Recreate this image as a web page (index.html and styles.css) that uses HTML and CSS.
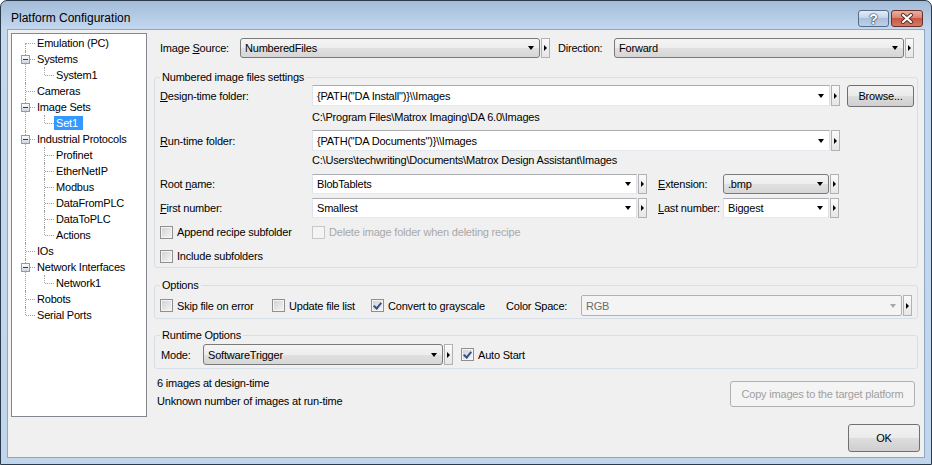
FILE: index.html
```html
<!DOCTYPE html>
<html lang="en">
<head>
  <meta charset="UTF-8" />
  <title>Platform Configuration</title>
  <link rel="stylesheet" href="styles.css">
</head>
<body>
  <div class="window">
    <div class="titlebar">
      <span class="title">Platform Configuration</span>
      <span class="capbtn help">?</span>
      <span class="capbtn close">
        <svg width="14" height="11" viewBox="0 0 14 11">
          <path d="M3 2 L11 9 M11 2 L3 9" stroke="#5a2a25" stroke-width="4" stroke-linecap="round"/>
          <path d="M3 2 L11 9 M11 2 L3 9" stroke="#fff" stroke-width="2.2" stroke-linecap="round"/>
        </svg>
      </span>
    </div>

    <div class="client">
      <div class="body">
        <ul class="tree">
          <li><div class="row"><span class="elb"></span><span class="lbl">Emulation (PC)</span></div></li>
          <li><div class="row"><span class="elb"><i class="exp"></i></span><span class="lbl">Systems</span></div>
            <ul>
              <li><div class="row"><span class="elb"></span><span class="lbl">System1</span></div></li>
            </ul>
          </li>
          <li><div class="row"><span class="elb"></span><span class="lbl">Cameras</span></div></li>
          <li><div class="row"><span class="elb"><i class="exp"></i></span><span class="lbl">Image Sets</span></div>
            <ul>
              <li><div class="row"><span class="elb"></span><span class="lbl sel">Set1</span></div></li>
            </ul>
          </li>
          <li><div class="row"><span class="elb"><i class="exp"></i></span><span class="lbl">Industrial Protocols</span></div>
            <ul>
              <li><div class="row"><span class="elb"></span><span class="lbl">Profinet</span></div></li>
              <li><div class="row"><span class="elb"></span><span class="lbl">EtherNetIP</span></div></li>
              <li><div class="row"><span class="elb"></span><span class="lbl">Modbus</span></div></li>
              <li><div class="row"><span class="elb"></span><span class="lbl">DataFromPLC</span></div></li>
              <li><div class="row"><span class="elb"></span><span class="lbl">DataToPLC</span></div></li>
              <li><div class="row"><span class="elb"></span><span class="lbl">Actions</span></div></li>
            </ul>
          </li>
          <li><div class="row"><span class="elb"></span><span class="lbl">IOs</span></div></li>
          <li><div class="row"><span class="elb"><i class="exp"></i></span><span class="lbl">Network Interfaces</span></div>
            <ul>
              <li><div class="row"><span class="elb"></span><span class="lbl">Network1</span></div></li>
            </ul>
          </li>
          <li><div class="row"><span class="elb"></span><span class="lbl">Robots</span></div></li>
          <li><div class="row"><span class="elb"></span><span class="lbl">Serial Ports</span></div></li>
        </ul>

        <div class="main">
          <div class="toprow">
            <span class="lab w-src">Image <u>S</u>ource:</span>
            <div class="combo list w-src-box"><span class="val">NumberedFiles</span><i class="dd"></i></div>
            <span class="spin"></span>
            <span class="lab w-dir">Direction:</span>
            <div class="combo list w-dir-box"><span class="val">Forward</span><i class="dd"></i></div>
            <span class="spin"></span>
          </div>

          <div class="group g-files">
            <div class="legend">Numbered image files settings</div>
            <div class="frow r-design">
              <span class="lab w-field"><u>D</u>esign-time folder:</span>
              <div class="combo edit w-path"><span class="val">{PATH("DA Install")}\\Images</span><i class="dd"></i></div>
              <span class="spin"></span>
              <button class="btn browse">Browse...</button>
            </div>
            <div class="path p-design">C:\Program Files\Matrox Imaging\DA 6.0\Images</div>
            <div class="frow r-run">
              <span class="lab w-field"><u>R</u>un-time folder:</span>
              <div class="combo edit w-path"><span class="val">{PATH("DA Documents")}\\Images</span><i class="dd"></i></div>
              <span class="spin"></span>
            </div>
            <div class="path p-run">C:\Users\techwriting\Documents\Matrox Design Assistant\Images</div>
            <div class="frow r-root">
              <span class="lab w-field">Root <u>n</u>ame:</span>
              <div class="combo edit w-name"><span class="val">BlobTablets</span><i class="dd"></i></div>
              <span class="spin"></span>
              <span class="lab w-ext"><u>E</u>xtension:</span>
              <div class="combo list w-extbox"><span class="val">.bmp</span><i class="dd"></i></div>
              <span class="spin"></span>
            </div>
            <div class="frow r-first">
              <span class="lab w-field"><u>F</u>irst number:</span>
              <div class="combo edit w-name"><span class="val">Smallest</span><i class="dd"></i></div>
              <span class="spin"></span>
              <span class="lab w-ext"><u>L</u>ast number:</span>
              <div class="combo edit w-extbox"><span class="val">Biggest</span><i class="dd"></i></div>
              <span class="spin"></span>
            </div>
            <div class="crow c-first">
              <label class="chk w-field"><i class="box"></i>Append recipe subfolder</label>
              <label class="chk off"><i class="box"></i>Delete image folder when deleting recipe</label>
            </div>
            <div class="crow c-second">
              <label class="chk"><i class="box"></i>Include subfolders</label>
            </div>
          </div>

          <div class="group g-options">
            <div class="legend">Options</div>
            <div class="frow r-options">
              <label class="chk w-skip"><i class="box"></i>Skip file on error</label>
              <label class="chk w-upd"><i class="box"></i>Update file list</label>
              <label class="chk w-gray"><i class="box on"></i>Convert to grayscale</label>
              <span class="lab w-cs">Color Space:</span>
              <div class="combo dis w-csbox"><span class="val">RGB</span><i class="dd"></i></div>
              <span class="spin"></span>
            </div>
          </div>

          <div class="group g-runtime">
            <div class="legend">Runtime Options</div>
            <div class="frow r-mode">
              <span class="lab w-mode">Mode:</span>
              <div class="combo list w-modebox"><span class="val">SoftwareTrigger</span><i class="dd"></i></div>
              <span class="spin"></span>
              <label class="chk auto"><i class="box on"></i>Auto Start</label>
            </div>
          </div>

          <div class="info">
            <div class="counts">
              <div>6 images at design-time</div>
              <div>Unknown number of images at run-time</div>
            </div>
            <button class="btn copy" disabled>Copy images to the target platform</button>
          </div>
        </div>
      </div>

      <div class="footer">
        <button class="btn ok">OK</button>
      </div>
    </div>
  </div>
</body>
</html>
```

FILE: styles.css
```css
body {
  margin: 0;
  background: #ffffff;
  font-family: "Liberation Sans", Arial, sans-serif;
  font-size: 11px;
  letter-spacing: -0.2px;
  color: #000;
}
.window {
  width: 932px;
  height: 465px;
  box-sizing: border-box;
  border: 1px solid #2b3b4c;
  border-radius: 7px 7px 0 0;
  background: linear-gradient(#a3bcd8 0, #c3d8ef 28px, #c1d6ed 100%);
  padding: 0 6px 6px;
  display: flex;
  flex-direction: column;
}

/* title bar */
.titlebar {
  height: 28px;
  display: flex;
  align-items: center;
  padding: 0 2px 0 4px;
}
.title {
  flex: 1;
  margin-top: 6px;
  font-size: 12px;
  letter-spacing: 0;
}
.capbtn {
  height: 15px;
  margin-top: 7px;
  border-radius: 3px;
  display: flex;
  align-items: center;
  justify-content: center;
}
.help {
  width: 29px;
  border: 1px solid #566d8a;
  background: linear-gradient(#e4ecf6 0, #c4d5ea 45%, #a9c0dc 50%, #bcd0e8 100%);
  color: #fff;
  font-weight: bold;
  font-size: 14px;
  text-shadow: 0 0 1px #2a3a50, 0 0 1px #2a3a50, 0 0 2px #2a3a50;
  margin-right: 2px;
}
.close {
  width: 30px;
  border: 1px solid #6b2f29;
  background: linear-gradient(#eab0a2 0, #d98472 45%, #c75843 50%, #d37a62 100%);
}

/* client area */
.client {
  flex: 1;
  background: #f0f0f0;
  border: 1px solid #8fa7c4;
  padding: 3px;
  display: flex;
  flex-direction: column;
}
.body {
  display: flex;
  height: 384px;
}

/* tree */
.tree {
  width: 136px;
  height: 384px;
  box-sizing: border-box;
  border: 1px solid #828790;
  background: #fff;
  margin: 0;
  padding: 1px 0 0;
  list-style: none;
}
.tree ul {
  list-style: none;
  margin: 0;
  padding-left: 19px;
}
.tree li {
  position: relative;
}
.tree li::before {
  content: "";
  position: absolute;
  left: 13px;
  top: 0;
  bottom: 0;
  border-left: 1px dotted #a0a0a0;
}
.tree > li:first-child::before {
  top: 8px;
}
.tree li:last-child::before {
  bottom: auto;
  height: 8px;
}
.row {
  display: flex;
  align-items: center;
  height: 16px;
}
.elb {
  position: relative;
  width: 23px;
  height: 16px;
  flex: none;
}
.elb::before {
  content: "";
  position: absolute;
  left: 14px;
  top: 8px;
  width: 9px;
  border-top: 1px dotted #a0a0a0;
}
.exp {
  position: absolute;
  left: 9px;
  top: 4px;
  width: 9px;
  height: 9px;
  box-sizing: border-box;
  border: 1px solid #8a9db3;
  background: linear-gradient(#ffffff, #cdd8e3);
  z-index: 1;
}
.exp::after {
  content: "";
  position: absolute;
  left: 1px;
  top: 3px;
  width: 5px;
  height: 1px;
  background: #1f3e66;
}
.lbl {
  padding: 0 2px;
  line-height: 14px;
  white-space: nowrap;
}
.lbl.sel {
  background: #3399ff;
  color: #fff;
  padding-right: 5px;
}

/* right side */
.main {
  margin-left: 7px;
  width: 764px;
  display: flex;
  flex-direction: column;
}
.toprow {
  display: flex;
  align-items: center;
  height: 20px;
  margin-top: 5px;
  padding-left: 6px;
}
.lab {
  flex: none;
  white-space: nowrap;
}
.w-src { width: 80px; }
.w-src-box { width: 300px; }
.w-dir { width: 56px; margin-left: 8px; }
.w-dir-box { width: 290px; }

.combo {
  flex: none;
  box-sizing: border-box;
  height: 100%;
  display: flex;
  align-items: center;
  padding: 0 5px 0 4px;
  white-space: nowrap;
}
.combo .val {
  flex: 1;
}
.dd {
  width: 0;
  height: 0;
  border-top: 4px solid #000;
  border-left: 3.5px solid transparent;
  border-right: 3.5px solid transparent;
}
.combo.list {
  border: 1px solid #7a7a7a;
  border-radius: 3px;
  background: linear-gradient(#f5f5f5 0, #ededed 50%, #e0e0e0 51%, #d6d6d6 100%);
}
.combo.edit {
  border: 1px solid;
  border-color: #abadb3 #dbdfe6 #e3e9ef #e2e3ea;
  background: #fff;
}
.combo.dis {
  border: 1px solid #adb2b5;
  border-radius: 2px;
  background: #f4f4f4;
  color: #6d6d6d;
}
.combo.dis .dd {
  border-top-color: #a8a8a8;
}
.spin {
  flex: none;
  width: 9px;
  height: 100%;
  box-sizing: border-box;
  margin-left: 1px;
  border: 1px solid #b2b2b2;
  background: linear-gradient(#fafafa, #e6e6e6);
  display: flex;
  align-items: center;
  justify-content: center;
}
.spin::after {
  content: "";
  border-left: 3px solid #000;
  border-top: 3px solid transparent;
  border-bottom: 3px solid transparent;
}

/* group boxes */
.group {
  border: 1px solid #d5dfe5;
  border-radius: 3px;
  padding: 0 5px;
}
.legend {
  width: max-content;
  margin: -7px 0 0;
  padding: 0 2px;
  line-height: 13px;
  background: #f0f0f0;
}
.frow {
  display: flex;
  align-items: center;
}
.crow {
  display: flex;
  align-items: center;
  height: 14px;
}
.path {
  padding-left: 152px;
  display: flex;
  align-items: center;
}
.w-field { width: 152px; }
.w-path { width: 518px; }
.w-name { width: 325px; }
.w-ext { width: 65px; margin-left: 11px; }
.w-extbox { width: 106px; }

.g-files { margin-top: 19px; padding-bottom: 4px; }
.r-design { height: 21px; margin-top: 1px; }
.p-design { height: 22px; }
.r-run { height: 21px; margin-top: 2px; }
.p-run { height: 18px; }
.r-root { height: 20px; margin-top: 5px; }
.r-first { height: 20px; margin-top: 4px; }
.c-first { margin-top: 7px; }
.c-second { margin-top: 10px; }

.g-options { margin-top: 17px; padding-bottom: 2px; }
.r-options { height: 21px; margin-top: 3px; }
.w-skip { width: 112px; }
.w-upd { width: 99px; }
.w-gray { width: 135px; }
.w-cs { width: 75px; }
.w-csbox { width: 321px; }

.g-runtime { margin-top: 16px; padding-bottom: 3px; }
.r-mode { height: 21px; margin-top: 2px; }
.w-mode { width: 42px; padding-left: 1px; }
.w-modebox { width: 240px; }
.auto { margin-left: 8px; }

/* checkboxes */
.chk {
  display: flex;
  align-items: center;
  white-space: nowrap;
  flex: none;
}
.box {
  width: 13px;
  height: 13px;
  box-sizing: border-box;
  margin-right: 4px;
  border: 1px solid #8e8f8f;
  box-shadow: inset 0 0 0 1px #f4f4f4;
  background: linear-gradient(135deg, #cfcfcf, #f7f7f7);
  flex: none;
  display: flex;
  align-items: center;
  justify-content: center;
}
.box.on::after {
  content: "";
  width: 3px;
  height: 6px;
  margin-top: -2px;
  border: solid #344d8c;
  border-width: 0 2px 2px 0;
  transform: rotate(40deg);
}
.chk.off {
  color: #a8a8a8;
}
.chk.off .box {
  border-color: #c8c8c8;
  background: #f4f4f4;
  box-shadow: none;
}

/* buttons */
.btn {
  font: inherit;
  letter-spacing: inherit;
  color: #000;
  border: 1px solid #707070;
  border-radius: 3px;
  background: linear-gradient(#f2f2f2 0, #ebebeb 50%, #dddddd 51%, #cfcfcf 100%);
  padding: 0;
}
.browse {
  width: 67px;
  height: 22px;
  margin-left: 7px;
  flex: none;
}

.info {
  display: flex;
  margin-top: 5px;
  padding-left: 3px;
  margin-right: 3px;
}
.counts {
  flex: 1;
}
.counts div {
  line-height: 18px;
}
.copy {
  width: 185px;
  height: 26px;
  margin-top: 7px;
  border-color: #adb2b5;
  background: #f4f4f4;
  color: #a0a0a0;
}

.footer {
  display: flex;
  justify-content: flex-end;
  margin-top: 7px;
  padding-right: 1px;
}
.ok {
  width: 72px;
  height: 28px;
}
```
